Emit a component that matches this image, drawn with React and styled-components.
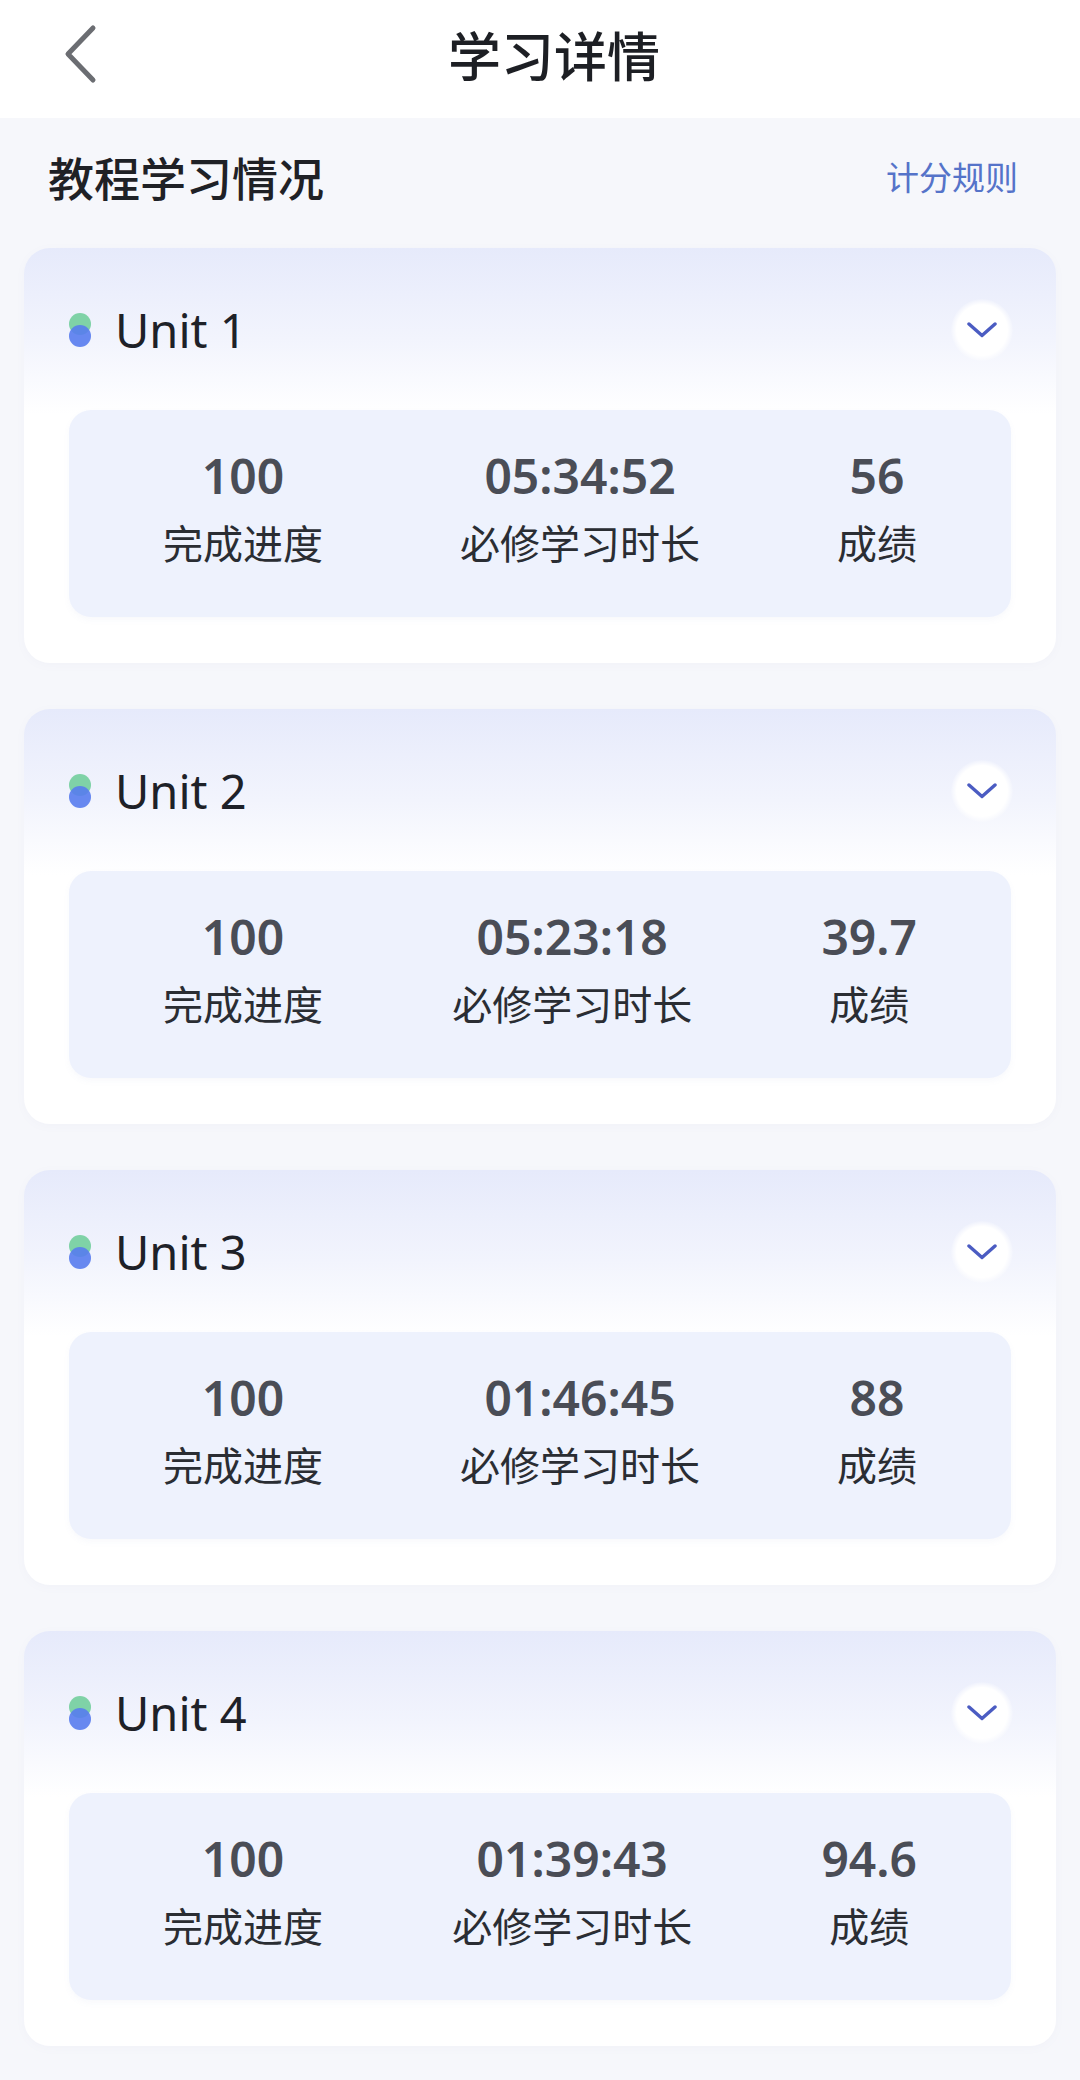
import React from 'react'
import styled, {createGlobalStyle} from 'styled-components'

const units = [
    {name: 'Unit 1', progress: '100', time: '05:34:52', score: '56'},
    {name: 'Unit 2', progress: '100', time: '05:23:18', score: '39.7'},
    {name: 'Unit 3', progress: '100', time: '01:46:45', score: '88'},
    {name: 'Unit 4', progress: '100', time: '01:39:43', score: '94.6'},
]

const App = () => {
    return (
        <Page>
            <GlobalStyle />
            <Header>
                <BackButton aria-label='back'>
                    <svg width='36' height='60' viewBox='0 0 36 60' fill='none'>
                        <path d='M31 4 L6 30 L31 56' stroke='#6b6d72' strokeWidth='5' strokeLinecap='round' strokeLinejoin='round' />
                    </svg>
                </BackButton>
                <Title>学习详情</Title>
            </Header>
            <SectionRow>
                <SectionTitle>教程学习情况</SectionTitle>
                <RuleLink>计分规则</RuleLink>
            </SectionRow>
            <CardList>
                {units.map((u) => (
                    <Card key={u.name}>
                        <CardHead>
                            <UnitName>
                                <Dot />
                                {u.name}
                            </UnitName>
                            <ToggleButton aria-label='expand'>
                                <svg width='30' height='16' viewBox='0 0 30 16' fill='none'>
                                    <path d='M2 2 L15 13.5 L28 2' stroke='#4b5cc2' strokeWidth='3.4' strokeLinecap='round' strokeLinejoin='round' />
                                </svg>
                            </ToggleButton>
                        </CardHead>
                        <StatBox>
                            <Stat>
                                <StatValue>{u.progress}</StatValue>
                                <StatLabel>完成进度</StatLabel>
                            </Stat>
                            <Stat>
                                <StatValue>{u.time}</StatValue>
                                <StatLabel>必修学习时长</StatLabel>
                            </Stat>
                            <Stat>
                                <StatValue>{u.score}</StatValue>
                                <StatLabel>成绩</StatLabel>
                            </Stat>
                        </StatBox>
                    </Card>
                ))}
            </CardList>
        </Page>
    )
}

export default App


const GlobalStyle = createGlobalStyle`
body{
    margin: 0;
    background: #f6f7fb;
    font-family: "Noto Sans", "Noto Sans CJK SC", sans-serif;
}
`;

const Page = styled.div`
width: 1080px;
min-height: 2080px;
background: #f6f7fb;
`;

const Header = styled.div`
height: 118px;
background: #fff;
display: flex;
align-items: center;
justify-content: center;
padding-left: 28px;
box-sizing: border-box;
position: relative;
`;

const BackButton = styled.button`
position: absolute;
left: 60px;
top: 24px;
width: 40px;
height: 60px;
padding: 0;
border: none;
background: none;
display: flex;
align-items: center;
justify-content: center;
`;

const Title = styled.h1`
margin: 0;
margin-top: -10px;
font-size: 53px;
font-weight: 500;
color: #1d1f24;
font-family: "Noto Sans CJK SC", sans-serif;
`;

const SectionRow = styled.div`
height: 130px;
display: flex;
align-items: center;
justify-content: space-between;
padding: 0 62px 14px 48px;
box-sizing: border-box;
`;

const SectionTitle = styled.h2`
margin: 0;
font-size: 46px;
font-weight: 500;
color: #1f2126;
font-family: "Noto Sans CJK SC", sans-serif;
`;

const RuleLink = styled.span`
font-size: 33px;
color: #5573c9;
font-family: "Noto Sans CJK SC", sans-serif;
`;

const CardList = styled.div`
display: flex;
flex-direction: column;
gap: 46px;
padding: 0 24px 34px;
`;

const Card = styled.div`
border-radius: 26px;
padding: 54px 45px 46px;
background: linear-gradient(180deg, #e6eafb 0%, #f2f4fd 22%, #ffffff 40%);
box-shadow: 0 2px 10px rgba(120, 130, 170, 0.04);
`;

const CardHead = styled.div`
height: 56px;
display: flex;
align-items: center;
justify-content: space-between;
margin-bottom: 52px;
`;

const UnitName = styled.div`
display: flex;
align-items: center;
gap: 24px;
font-size: 47px;
color: #1e2128;
font-family: "Noto Sans", sans-serif;
line-height: 1;
`;

const Dot = styled.span`
position: relative;
width: 22px;
height: 34px;
&::before, &::after{
    content: '';
    position: absolute;
    left: 0;
    width: 22px;
    height: 22px;
    border-radius: 50%;
}
&::before{
    top: 0;
    background: #7fd2a7;
}
&::after{
    top: 12px;
    background: rgba(88, 124, 238, 0.9);
}
`;

const ToggleButton = styled.button`
width: 62px;
height: 62px;
margin-right: -2px;
border-radius: 50%;
border: none;
padding: 0;
background: radial-gradient(circle, #ffffff 0%, #ffffff 58%, rgba(255, 255, 255, 0) 72%);
display: flex;
align-items: center;
justify-content: center;
`;

const StatBox = styled.div`
height: 207px;
box-sizing: border-box;
border-radius: 22px;
background: #eef2fd;
box-shadow: 0 3px 6px rgba(110, 130, 200, 0.05);
display: flex;
justify-content: space-between;
padding: 36px 94px 0;
`;

const Stat = styled.div`
display: flex;
flex-direction: column;
align-items: center;
`;

const StatValue = styled.div`
font-size: 48px;
font-weight: 600;
line-height: 60px;
color: #4a4d56;
font-family: "Noto Sans", sans-serif;
`;

const StatLabel = styled.div`
margin-top: 8px;
font-size: 40px;
line-height: 56px;
color: #2a2d33;
font-family: "Noto Sans CJK SC", sans-serif;
`;
